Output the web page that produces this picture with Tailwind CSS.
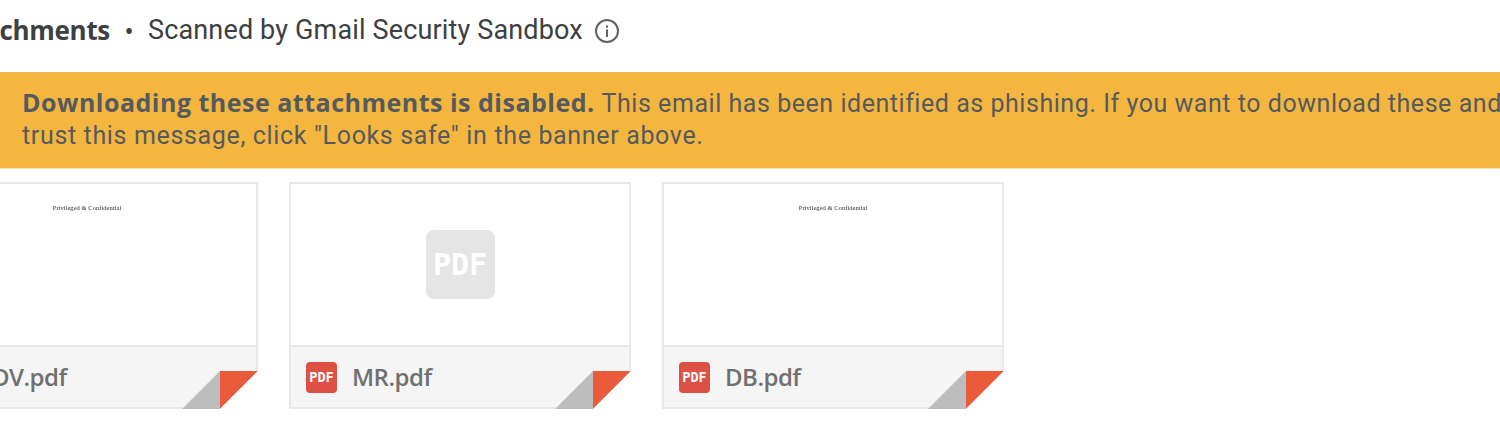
<!DOCTYPE html>
<html lang="en">
  <head>
    <meta charset="UTF-8" />
    <title>Attachments</title>
    <script src="https://cdn.jsdelivr.net/npm/@tailwindcss/browser@4"></script>
  </head>
  <body class="bg-white h-[430px] overflow-hidden font-['Roboto',sans-serif]">
    <!-- header -->
    <div class="h-[60px] mb-[12px] flex items-center whitespace-nowrap -ml-[60px]">
      <span class="w-[170px] text-right text-[26px] font-bold text-[#3c4043] font-['Open_Sans',sans-serif] tracking-[-0.3px] overflow-hidden">Attachments</span>
      <span class="w-[38px] text-center text-[27px] pt-[5px] text-[#3c4043]">•</span>
      <span class="text-[27px] text-[#3c4043] tracking-[0.15px]">Scanned by Gmail Security Sandbox</span>
      <svg class="ml-[11px] mt-[2px]" width="26" height="26" viewBox="0 0 26 26" fill="none">
        <circle cx="13" cy="13" r="11" stroke="#5f6368" stroke-width="2" />
        <rect x="12" y="11.5" width="2" height="7.5" fill="#5f6368" />
        <rect x="12" y="7.5" width="2" height="2.2" fill="#5f6368" />
      </svg>
    </div>

    <!-- warning banner -->
    <div class="h-[97px] bg-[#f4b63f] border-t border-t-[#e6b35a] border-b border-b-[#f6e3bd] pl-[22px] pt-[13px] text-[25px] leading-[32px] text-[#555a5e] whitespace-nowrap tracking-[0.65px]">
      <b class="font-bold font-['Open_Sans',sans-serif] tracking-[0.5px]">Downloading these attachments is disabled.</b> <span class="tracking-[0.54px]">This email has been identified as phishing. If you want to download these and</span><br />
      trust this message, click "Looks safe" in the banner above.
    </div>

    <!-- attachment cards -->
    <div class="flex gap-[31px] mt-[13px] -ml-[84px]">
      <div class="relative w-[342px] h-[227px] shrink-0 border-2 border-[#e8e8e8] flex flex-col">
        <div class="h-[161px] bg-white text-center pt-[19px] font-['Liberation_Serif',serif] text-[6.6px] leading-[10px] text-[#333333] blur-[0.3px]">Privileged &amp; Confidential</div>
        <div class="flex-1 bg-[#f5f5f5] border-t-2 border-[#e8e8e8] flex items-center pl-[15px]">
          <div class="w-[31px] h-[31px] shrink-0 rounded-[4px] bg-[#dd5144] text-white text-[13.5px] font-bold font-['DejaVu_Sans_Mono',monospace] text-center leading-[31px]">PDF</div>
          <span class="ml-[28px] text-[24px] font-semibold text-[#707070] font-['Open_Sans',sans-serif] tracking-[-0.5px]">DV.pdf</span>
        </div>
        <svg class="absolute -right-[2px] -bottom-[2px]" width="76" height="38" viewBox="0 0 76 38">
          <polygon points="0,38 38,0 38,38" fill="#bdbdbd" />
          <polygon points="38,0 76,0 38,38" fill="#ea5b3c" />
          <polygon points="76,0 76,38 38,38" fill="#ffffff" />
        </svg>
      </div>

      <div class="relative w-[342px] h-[227px] shrink-0 border-2 border-[#e8e8e8] flex flex-col">
        <div class="h-[161px] bg-white flex items-center justify-center">
          <div class="w-[69px] h-[69px] rounded-[8px] bg-[#e5e5e5] text-white text-[30px] font-bold font-['DejaVu_Sans_Mono',monospace] text-center leading-[69px]">PDF</div>
        </div>
        <div class="flex-1 bg-[#f5f5f5] border-t-2 border-[#e8e8e8] flex items-center pl-[15px]">
          <div class="w-[31px] h-[31px] shrink-0 rounded-[4px] bg-[#dd5144] text-white text-[13.5px] font-bold font-['DejaVu_Sans_Mono',monospace] text-center leading-[31px]">PDF</div>
          <span class="ml-[15px] text-[24px] font-semibold text-[#707070] font-['Open_Sans',sans-serif] tracking-[-0.5px]">MR.pdf</span>
        </div>
        <svg class="absolute -right-[2px] -bottom-[2px]" width="76" height="38" viewBox="0 0 76 38">
          <polygon points="0,38 38,0 38,38" fill="#bdbdbd" />
          <polygon points="38,0 76,0 38,38" fill="#ea5b3c" />
          <polygon points="76,0 76,38 38,38" fill="#ffffff" />
        </svg>
      </div>

      <div class="relative w-[342px] h-[227px] shrink-0 border-2 border-[#e8e8e8] flex flex-col">
        <div class="h-[161px] bg-white text-center pt-[19px] font-['Liberation_Serif',serif] text-[6.6px] leading-[10px] text-[#333333] blur-[0.3px]">Privileged &amp; Confidential</div>
        <div class="flex-1 bg-[#f5f5f5] border-t-2 border-[#e8e8e8] flex items-center pl-[15px]">
          <div class="w-[31px] h-[31px] shrink-0 rounded-[4px] bg-[#dd5144] text-white text-[13.5px] font-bold font-['DejaVu_Sans_Mono',monospace] text-center leading-[31px]">PDF</div>
          <span class="ml-[15px] text-[24px] font-semibold text-[#707070] font-['Open_Sans',sans-serif] tracking-[-0.5px]">DB.pdf</span>
        </div>
        <svg class="absolute -right-[2px] -bottom-[2px]" width="76" height="38" viewBox="0 0 76 38">
          <polygon points="0,38 38,0 38,38" fill="#bdbdbd" />
          <polygon points="38,0 76,0 38,38" fill="#ea5b3c" />
          <polygon points="76,0 76,38 38,38" fill="#ffffff" />
        </svg>
      </div>
    </div>
  </body>
</html>
